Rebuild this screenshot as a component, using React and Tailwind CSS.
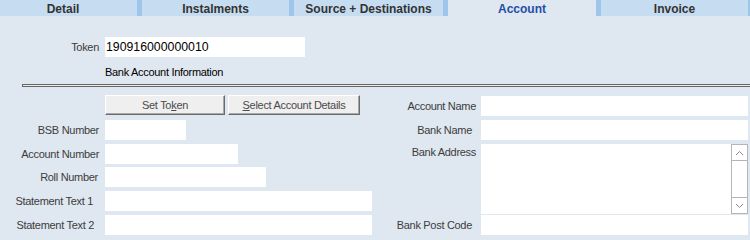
import React from "react";

const tabs = [
  { name: "Detail", w: "w-[148px]" },
  { name: "Instalments", w: "w-[147px]" },
  { name: "Source + Destinations", w: "w-[149px]" },
  { name: "Account", w: "w-[148px]", active: true },
  { name: "Invoice", w: "w-[147px]" },
];

function Label({ children, className = "" }) {
  return (
    <div className={"text-right text-[11px] leading-[13px] text-[#3c3c3c] tracking-[-0.3px] " + className}>
      {children}
    </div>
  );
}

function Btn({ children, className = "" }) {
  return (
    <div
      className={
        "h-[20px] bg-[#efefef] border-t border-l border-t-white border-l-white border-b border-r border-b-[#6a6a6a] border-r-[#6a6a6a] shadow-[inset_-1px_-1px_0_#a9a9a9] flex items-center justify-center text-[11px] tracking-[-0.3px] text-[#4a4a4a] " +
        className
      }
    >
      {children}
    </div>
  );
}

export default function App() {
  return (
    <div
      className="w-[750px] h-[240px] overflow-hidden bg-[#dfe7f0]"
      style={{ fontFamily: '"Liberation Sans", Arial, sans-serif' }}
    >
      {/* Tabs */}
      <div className="h-[16px] bg-[#9ec5ea] overflow-hidden">
        <div className="flex gap-[5px] ml-[-11px]">
          {tabs.map((t) => (
            <div
              key={t.name}
              className={
                t.w +
                " shrink-0 h-[16px] pt-[3px] leading-[16px] text-center text-[12px] font-bold overflow-hidden " +
                (t.active ? "bg-[#dfe7f0] text-[#1f50a8]" : "bg-[#c6dcf0] text-[#333333]")
              }
            >
              <div className="leading-[12px]">{t.name}</div>
            </div>
          ))}
        </div>
      </div>

      {/* Token row */}
      <div className="flex items-center mt-[21px]">
        <Label className="w-[99px]">Token</Label>
        <div className="ml-[6px] w-[200px] h-[20px] bg-white text-[12.3px] leading-[20px] text-black pl-[1px]">
          190916000000010
        </div>
      </div>

      <div className="ml-[105px] mt-[9px] text-[11px] leading-[13px] tracking-[-0.3px] text-black">
        Bank Account Information
      </div>

      <div className="ml-[22px] mt-[5px] h-[3px] border border-r-0 border-[#666666] bg-[#ececec]" />

      {/* Two columns */}
      <div className="flex">
        {/* Left */}
        <div className="w-[375px] shrink-0">
          <div className="flex mt-[8px] ml-[105px] gap-[3px]">
            <Btn className="w-[120px]">
              Set To<span className="underline">k</span>en
            </Btn>
            <Btn className="w-[132px]">
              <span className="underline">S</span>elect Account Details
            </Btn>
          </div>
          <div className="flex items-center mt-[5px]">
            <Label className="w-[99px]">BSB Number</Label>
            <div className="ml-[6px] w-[81px] h-[20px] bg-white" />
          </div>
          <div className="flex items-center mt-[4px]">
            <Label className="w-[99px]">Account Number</Label>
            <div className="ml-[6px] w-[133px] h-[20px] bg-white" />
          </div>
          <div className="flex items-center mt-[3px]">
            <Label className="w-[98px]">Roll Number</Label>
            <div className="ml-[7px] w-[161px] h-[20px] bg-white" />
          </div>
          <div className="flex items-center mt-[4px]">
            <Label className="w-[93px]">Statement Text 1</Label>
            <div className="ml-[12px] w-[267px] h-[20px] bg-white" />
          </div>
          <div className="flex items-center mt-[4px]">
            <Label className="w-[94px]">Statement Text 2</Label>
            <div className="ml-[11px] w-[267px] h-[20px] bg-white" />
          </div>
        </div>

        {/* Right */}
        <div className="flex-1">
          <div className="flex items-center mt-[9px]">
            <Label className="w-[101px]">Account Name</Label>
            <div className="ml-[5px] w-[267px] h-[20px] bg-white" />
          </div>
          <div className="flex items-center mt-[4px]">
            <Label className="w-[97px]">Bank Name</Label>
            <div className="ml-[9px] w-[267px] h-[20px] bg-white" />
          </div>
          <div className="flex mt-[4px]">
            <Label className="w-[101px] pt-[2px]">Bank Address</Label>
            <div className="ml-[5px] w-[267px] h-[70px] bg-white flex">
              <div className="flex-1" />
              <div className="w-[17px] border border-[#b5b5b5] flex flex-col">
                <div className="h-[16px] border-b border-[#b5b5b5] flex items-center justify-center">
                  <svg width="9" height="6" viewBox="0 0 9 6">
                    <path d="M1 5 L4.5 1.5 L8 5" fill="none" stroke="#8a8a8a" strokeWidth="1" />
                  </svg>
                </div>
                <div className="flex-1" />
                <div className="h-[16px] border-t border-[#b5b5b5] flex items-center justify-center">
                  <svg width="9" height="6" viewBox="0 0 9 6">
                    <path d="M1 1 L4.5 4.5 L8 1" fill="none" stroke="#8a8a8a" strokeWidth="1" />
                  </svg>
                </div>
              </div>
            </div>
          </div>
          <div className="flex items-center mt-[1px]">
            <Label className="w-[97px]">Bank Post Code</Label>
            <div className="ml-[9px] w-[267px] h-[20px] bg-white" />
          </div>
        </div>
      </div>
    </div>
  );
}
